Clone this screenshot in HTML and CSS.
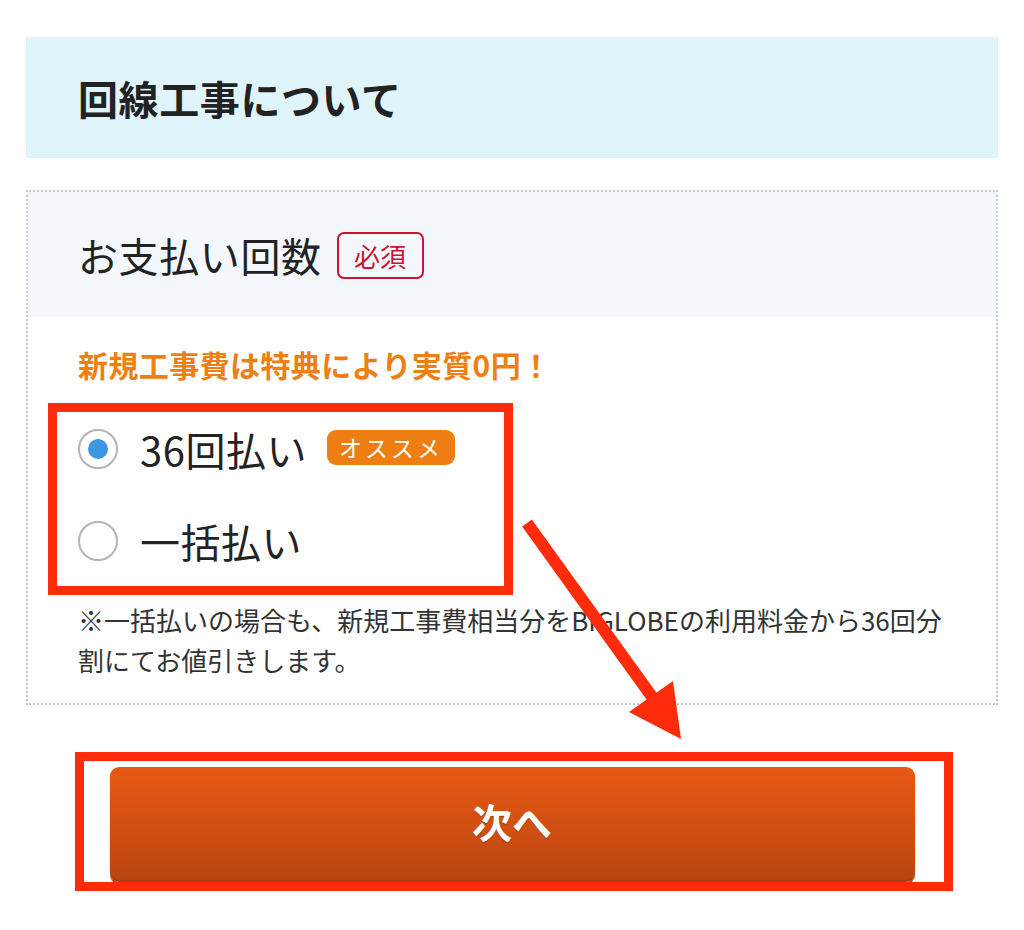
FILE: index.html
```html
<!DOCTYPE html>
<html lang="ja">
<head>
<meta charset="utf-8">
<link rel="stylesheet" href="styles.css">
</head>
<body>
<div class="page">
  <div class="header">回線工事について</div>
  <div class="section">
    <div class="section-head">
      <span class="section-title">お支払い回数</span>
      <span class="req">必須</span>
    </div>
    <div class="section-body">
      <p class="promo">新規工事費は特典により実質0円！</p>
      <div class="options">
        <label class="option">
          <span class="radio checked"></span>
          <span class="opt-text">36回払い</span>
          <span class="rec">オススメ</span>
        </label>
        <label class="option">
          <span class="radio"></span>
          <span class="opt-text">一括払い</span>
        </label>
      </div>
      <p class="note">※一括払いの場合も、新規工事費相当分をBIGLOBEの利用料金から36回分<br>割にてお値引きします。</p>
    </div>
  </div>
  <div class="actions">
    <button class="next">次へ</button>
  </div>
</div>
<svg class="overlay" width="1024" height="930" viewBox="0 0 1024 930">
  <rect x="52.5" y="407.5" width="456" height="183" fill="none" stroke="#ff2b0a" stroke-width="9"/>
  <rect x="79.5" y="756.5" width="869" height="130" fill="none" stroke="#ff2b0a" stroke-width="9"/>
  <line x1="527" y1="523" x2="655" y2="701" stroke="#ff2b0a" stroke-width="12"/>
  <polygon points="629,712 673,681 681,739" fill="#ff2b0a"/>
</svg>
</body>
</html>
```

FILE: styles.css
```css
* { box-sizing: border-box; }
html, body { margin: 0; padding: 0; background: #fff; }
body {
  position: relative;
  width: 1024px;
  height: 930px;
  overflow: hidden;
  font-family: "Noto Sans CJK JP", "Noto Sans", sans-serif;
  color: #222;
}
.page { padding: 37px 26px 0; }
.header {
  background: #e0f4fb;
  height: 121px;
  display: flex;
  align-items: center;
  padding-left: 52px;
  font-size: 40px;
  letter-spacing: 0.6px;
  font-weight: 700;
  color: #222;
}
.section {
  margin-top: 32px;
  border: 2px dotted #c6c6c6;
}
.section-head {
  background: #f4f8fc;
  height: 125px;
  display: flex;
  align-items: center;
  gap: 15px;
  padding-left: 50px;
}
.section-title {
  font-size: 40px;
  letter-spacing: 0.6px;
  font-weight: 400;
  color: #222;
}
.req {
  display: inline-flex;
  align-items: center;
  justify-content: center;
  width: 87px;
  height: 47px;
  border: 2px solid #c8142e;
  border-radius: 7px;
  color: #c8142e;
  font-size: 26px;
  margin-top: 2px;
}
.section-body { padding: 27px 20px 23px 50px; }
.promo {
  margin: 0;
  font-size: 30px;
  letter-spacing: 0.4px;
  line-height: 40px;
  font-weight: 700;
  color: #ee7f12;
}
.options { margin-top: 19px; }
.option {
  display: flex;
  align-items: center;
  height: 92px;
}
.radio {
  width: 40px;
  height: 40px;
  border: 2px solid #b4b4b4;
  border-radius: 50%;
  display: flex;
  align-items: center;
  justify-content: center;
  flex: none;
}
.radio.checked::after {
  content: "";
  width: 20px;
  height: 20px;
  border-radius: 50%;
  background: #3a97e0;
}
.opt-text {
  margin-left: 22px;
  font-size: 40px;
  letter-spacing: 0.5px;
  color: #222;
}
.rec {
  margin-left: 20px;
  background: #ee7d12;
  color: #fff;
  font-size: 23px;
  letter-spacing: 3px;
  height: 35px;
  width: 128px;
  border-radius: 9px;
  display: inline-flex;
  align-items: center;
  justify-content: center;
  margin-top: -4px;
}
.note {
  margin: 13px 0 0;
  font-size: 26px;
  line-height: 40px;
  color: #333;
  white-space: nowrap;
}
.actions {
  margin-top: 62px;
  display: flex;
  justify-content: center;
}
.next {
  width: 805px;
  height: 115px;
  padding: 0 0 8px;
  border: none;
  border-radius: 9px;
  background: linear-gradient(#e65914, #d04e12 55%, #b8440f);
  box-shadow: 0 2px 1px #9a360a, inset 0 -2px 0 rgba(0,0,0,0.08);
  color: #fff;
  font-family: "Noto Sans CJK JP", sans-serif;
  font-size: 40px;
  font-weight: 700;
  text-shadow: 0 1px 1px rgba(0,0,0,0.25);
}
.overlay {
  position: absolute;
  top: 0;
  left: 0;
  pointer-events: none;
}
```
